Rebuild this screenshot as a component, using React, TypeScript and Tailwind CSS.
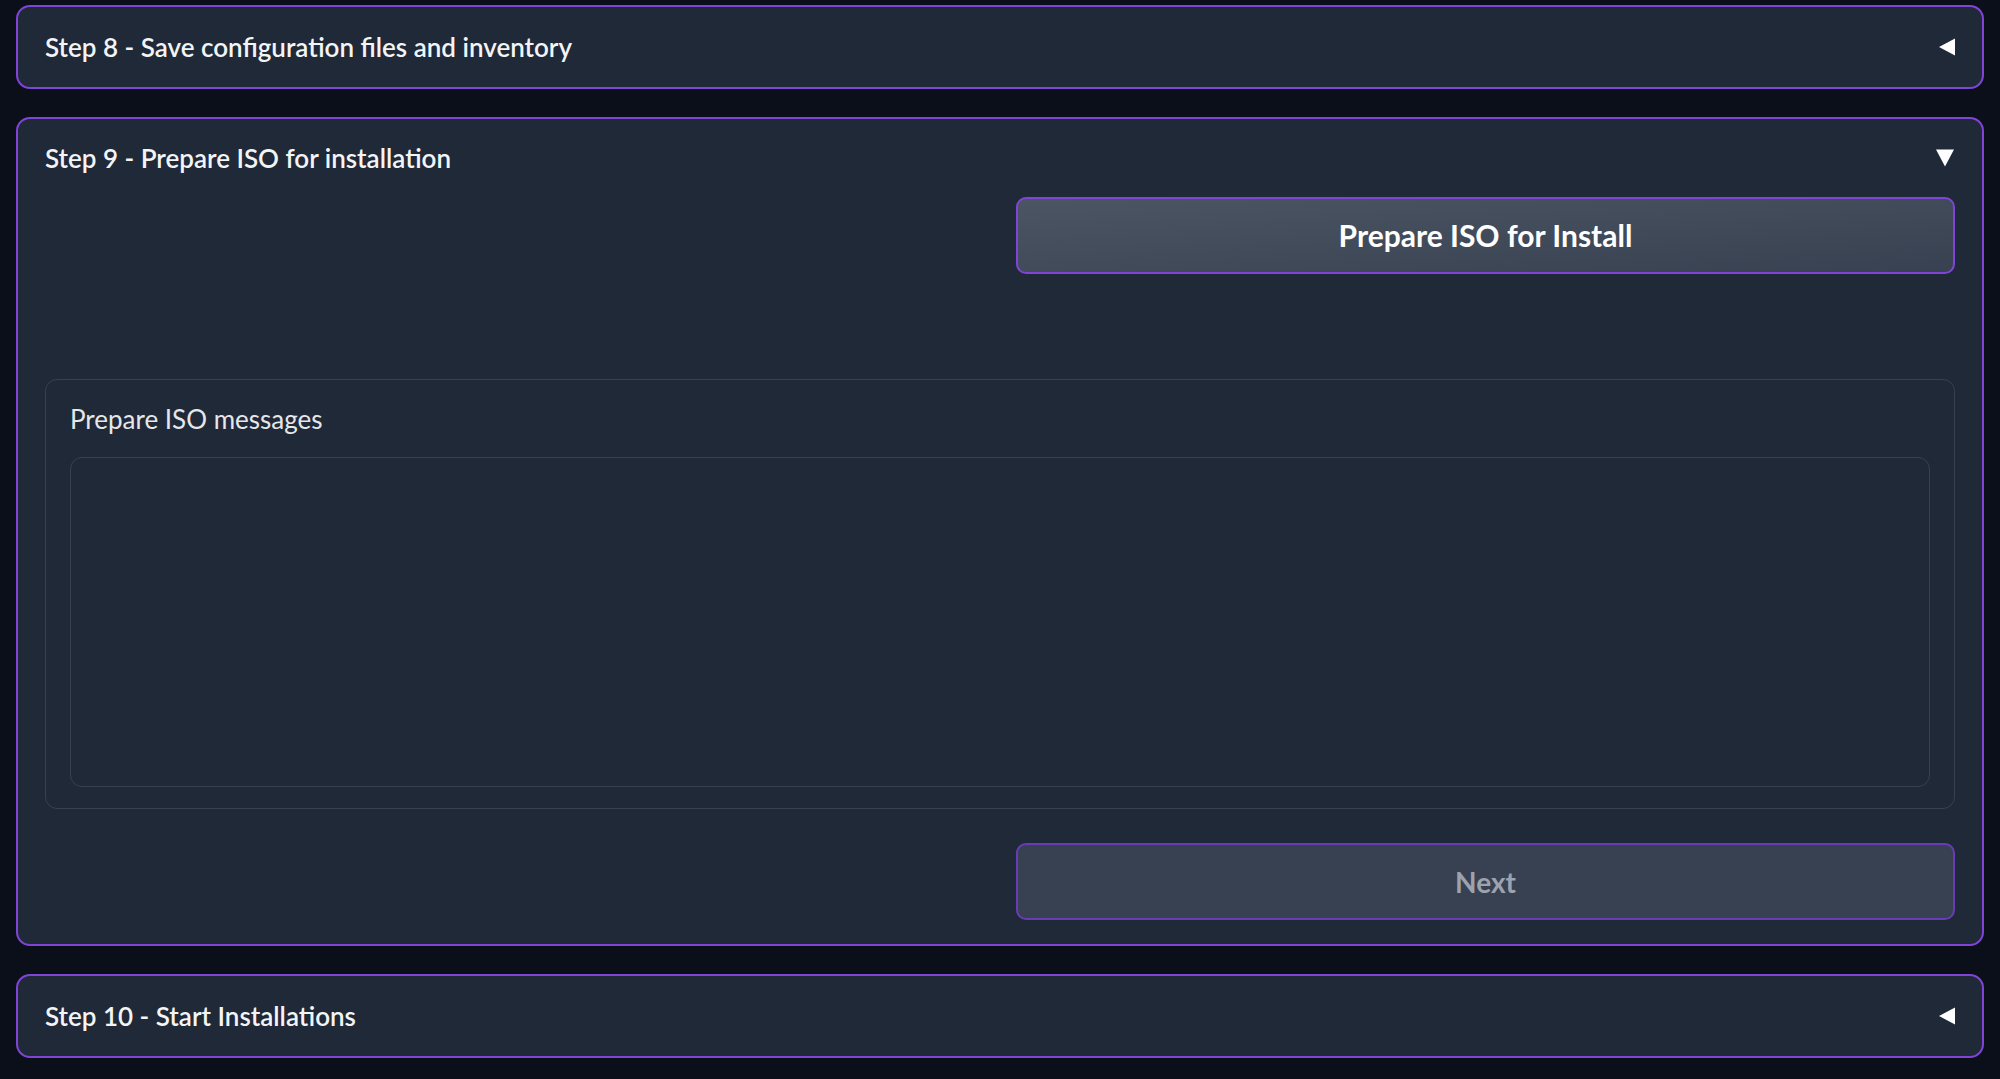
import React from "react";

const font = { fontFamily: "Lato, 'Open Sans', sans-serif" };

const TriLeft = () => (
  <svg width="20" height="20" viewBox="0 0 20 20" className="text-white">
    <path d="M2 10 L18 1.5 L18 18.5 Z" fill="currentColor" />
  </svg>
);

const TriDown = () => (
  <svg width="20" height="20" viewBox="0 0 20 20" className="text-white">
    <path d="M1 1.5 L19 1.5 L10 18.5 Z" fill="currentColor" />
  </svg>
);

const Collapsed = ({ title }: { title: string }) => (
  <div className="rounded-[14px] border-2 border-[#8044d8] bg-[#1f2937]">
    <div className="flex h-[80px] items-center justify-between pl-[27px] pr-[25px]">
      <span className="text-[26px] font-semibold text-[#f3f4f6]">{title}</span>
      <TriLeft />
    </div>
  </div>
);

export default function App() {
  return (
    <div
      className="min-h-[1079px] w-full bg-[#0b0f19] px-4 pt-[5px]"
      style={font}
    >
      <div className="flex flex-col gap-[28px]">
        <Collapsed title="Step 8 - Save configuration files and inventory" />

        <div className="rounded-[14px] border-2 border-[#8044d8] bg-[#1f2937] pb-[24px]">
          <div className="flex h-[78px] items-center justify-between pl-[27px] pr-[27px]">
            <span className="text-[26px] font-semibold text-[#f3f4f6]">
              Step 9 - Prepare ISO for installation
            </span>
            <TriDown />
          </div>

          <div className="px-[27px]">
            <div className="grid grid-cols-2 gap-8">
              <div />
              <button className="h-[77px] rounded-[10px] border-2 border-[#8044d8] bg-gradient-to-br from-[#4b5563] to-[#374151] text-[30px] font-bold text-white">
                Prepare ISO for Install
              </button>
            </div>

            <div className="mt-[105px] rounded-[12px] border border-[#374151] bg-[#1f2937] px-[24px] pb-[21px] pt-[24px]">
              <div className="text-[26px] leading-[30px] text-[#e5e7eb]">
                Prepare ISO messages
              </div>
              <div className="mt-[23px] h-[330px] rounded-[12px] border border-[#374151] bg-[#1f2937]" />
            </div>

            <div className="mt-[34px] grid grid-cols-2 gap-8">
              <div />
              <button className="h-[77px] rounded-[10px] border-2 border-[#6a3bb8] bg-[#374151] text-[28px] font-bold text-[#9ca3af]">
                Next
              </button>
            </div>
          </div>
        </div>

        <Collapsed title="Step 10 - Start Installations" />
      </div>
    </div>
  );
}
